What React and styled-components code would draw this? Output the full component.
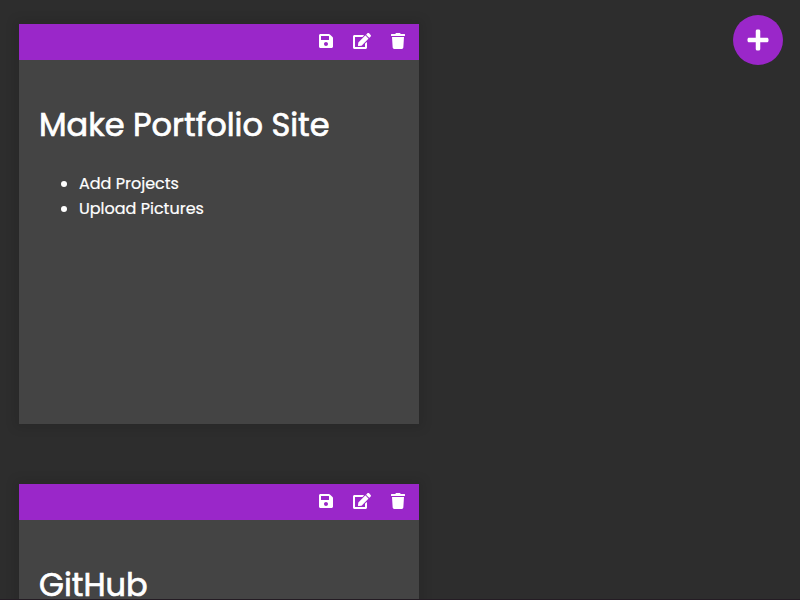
import React from "react";
import styled, { createGlobalStyle } from "styled-components";
import { FaSave, FaEdit, FaTrash, FaPlus } from "react-icons/fa";

const GlobalStyle = createGlobalStyle`
  * { box-sizing: border-box; }
  body {
    margin: 0;
    height: 600px;
    overflow: hidden;
    background: #2d2d2d;
    font-family: Poppins, "Open Sans", "Noto Sans", sans-serif;
  }
`;

const Notes = styled.main`
  display: flex;
  flex-direction: column;
  align-items: flex-start;
  gap: 60px;
  padding: 24px 19px;
  height: 600px;
  overflow: hidden;
  border-bottom: 1px solid #241c24;
`;

const Note = styled.article`
  flex: none;
  width: 400px;
  height: 400px;
  background: #444;
  color: #fff;
  box-shadow: 0 0 10px 4px rgba(0, 0, 0, 0.1);
`;

const Tools = styled.header`
  display: flex;
  justify-content: flex-end;
  align-items: center;
  height: 36px;
  padding: 0 12px 2px 0;
  gap: 18px;
  background: #9a27c9;
`;

const ToolButton = styled.button`
  display: flex;
  align-items: center;
  justify-content: center;
  width: 18px;
  height: 16px;
  padding: 0;
  border: 0;
  background: none;
  color: #fff;

  svg {
    display: block;
    flex: none;
    width: 18px;
    height: 16px;
  }
`;

const Content = styled.div`
  padding: 40px 20px;
`;

const Title = styled.h1`
  width: max-content;
  margin: 0 0 21px;
  font-size: 32px;
  font-weight: 400;
  line-height: 50px;
  -webkit-text-stroke: 0.7px #fff;
  white-space: nowrap;
`;

const Tasks = styled.ul`
  margin: 0;
  padding-left: 40px;
  font-size: 16px;
  font-weight: 400;
  line-height: 25px;
  -webkit-text-stroke: 0.2px #fff;
`;

const Task = styled.li``;

const AddButton = styled.button`
  position: fixed;
  top: 15px;
  right: 17px;
  display: flex;
  align-items: center;
  justify-content: center;
  width: 50px;
  height: 50px;
  padding: 0;
  border: 0;
  border-radius: 50%;
  background: #9a27c9;
  color: #fff;
  font-size: 24px;
`;

const notes = [
  { title: "Make Portfolio Site", tasks: ["Add Projects", "Upload Pictures"] },
  { title: "GitHub", tasks: [] },
];

export default function App() {
  return (
    <>
      <GlobalStyle />
      <Notes>
        {notes.map((note) => (
          <Note key={note.title}>
            <Tools>
              <ToolButton aria-label="Save"><FaSave /></ToolButton>
              <ToolButton aria-label="Edit"><FaEdit /></ToolButton>
              <ToolButton aria-label="Delete"><FaTrash /></ToolButton>
            </Tools>
            <Content>
              <Title>{note.title}</Title>
              <Tasks>
                {note.tasks.map((t) => (
                  <Task key={t}>{t}</Task>
                ))}
              </Tasks>
            </Content>
          </Note>
        ))}
      </Notes>
      <AddButton aria-label="Add note"><FaPlus /></AddButton>
    </>
  );
}
